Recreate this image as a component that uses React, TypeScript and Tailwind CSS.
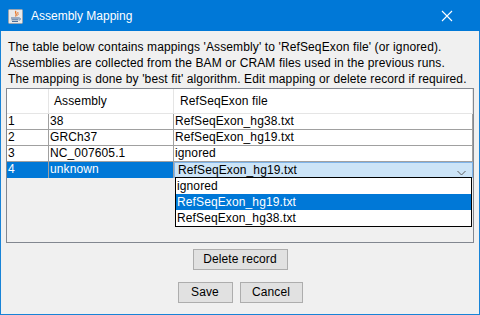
import React from "react";

const rows = [
  { n: "1", asm: "38", file: "RefSeqExon_hg38.txt" },
  { n: "2", asm: "GRCh37", file: "RefSeqExon_hg19.txt" },
  { n: "3", asm: "NC_007605.1", file: "ignored" },
];

const options = ["ignored", "RefSeqExon_hg19.txt", "RefSeqExon_hg38.txt"];

function JavaIcon() {
  return (
    <svg width="15" height="15" viewBox="0 0 15 15">
      <rect x="0.5" y="0.5" width="14" height="14" rx="1" fill="#e9e9e9" stroke="#9aa4b0" />
      <path d="M8 2 C6 4 10 5 7.5 7.5" stroke="#e8782a" strokeWidth="1.3" fill="none" />
      <path d="M10 3 C9 4.5 11 5 9.5 6.5" stroke="#e8782a" strokeWidth="1" fill="none" />
      <path d="M3 9 H11 M3.5 10.8 H10.5 M4 12.5 H10" stroke="#4a6f9c" strokeWidth="1" />
      <path d="M11 9 C13 9 13 11 11 11" stroke="#4a6f9c" strokeWidth="0.9" fill="none" />
    </svg>
  );
}

function CloseIcon() {
  return (
    <svg width="12" height="12" viewBox="0 0 12 12">
      <path d="M1 1 L11 11 M11 1 L1 11" stroke="#fff" strokeWidth="1.1" />
    </svg>
  );
}

export default function App() {
  return (
    <div
      className="w-[480px] h-[315px] flex flex-col bg-[#f0f0f0] text-[12px] text-black"
      style={{ fontFamily: '"Liberation Sans", Arial, sans-serif' }}
    >
      {/* Title bar */}
      <div className="h-[31px] bg-[#0078d7] flex items-center text-white shrink-0">
        <div className="ml-[8px] mt-[1px]">
          <JavaIcon />
        </div>
        <div className="ml-[8px] text-[12px]">Assembly Mapping</div>
        <div className="ml-auto mr-[27px] flex items-center">
          <CloseIcon />
        </div>
      </div>

      <div className="flex-1 flex flex-col border-x border-b border-[#1883d7] px-[5px] pt-[8px] tracking-[0.12px]">
        <div className="pl-[2px] leading-[16px] whitespace-nowrap">
          <div>The table below contains mappings 'Assembly' to 'RefSeqExon file' (or ignored).</div>
          <div>Assemblies are collected from the BAM or CRAM files used in the previous runs.</div>
          <div>The mapping is done by 'best fit' algorithm. Edit mapping or delete record if required.</div>
        </div>

        {/* Table pane */}
        <div className="relative mt-[1px] h-[155px] border border-[#828790] bg-[#f0f0f0]">
          <div className="flex h-[25px] bg-white border-b border-[#e5e5e5]">
            <div className="w-[42px] border-r border-[#e5e5e5]" />
            <div className="w-[125px] border-r border-[#e5e5e5] pl-[5px] flex items-center">Assembly</div>
            <div className="w-[299px] border-r border-[#e5e5e5] pl-[6px] flex items-center">RefSeqExon file</div>
          </div>
          {rows.map((r) => (
            <div key={r.n} className="flex h-[16px] bg-white border-b border-[#a0a0a0] leading-[15px]">
              <div className="w-[42px] border-r border-[#a0a0a0] pl-[1px]">{r.n}</div>
              <div className="w-[125px] border-r border-[#a0a0a0] pl-[1px]">{r.asm}</div>
              <div className="w-[299px] border-r border-[#a0a0a0] pl-[1px]">{r.file}</div>
            </div>
          ))}
          <div className="flex h-[16px] leading-[15px]">
            <div className="w-[42px] bg-[#0078d7] text-white border-r border-[#a0a0a0] pl-[1px]">4</div>
            <div className="w-[125px] bg-[#0078d7] text-white border-r border-[#a0a0a0] pl-[1px]">unknown</div>
            <div className="w-[299px] border border-[#7eb4ea] bg-[#cce4f7] flex items-center pl-[3px] pr-[6px]">
              <span className="flex-1 overflow-hidden h-[13px] leading-[13px]">RefSeqExon_hg19.txt</span>
              <svg width="9" height="6" viewBox="0 0 9 6" className="mt-[5px]">
                <path d="M0.5 1 L4.5 5 L8.5 1" stroke="#606060" fill="none" strokeWidth="1" />
              </svg>
            </div>
          </div>

          {/* Dropdown popup */}
          <div className="absolute left-[168px] top-[88px] w-[297px] border border-black bg-white">
            {options.map((o, i) => (
              <div
                key={o}
                className={`h-[16px] leading-[16px] pl-[1px] ${i === 1 ? "bg-[#0078d7] text-white" : ""}`}
              >
                {o}
              </div>
            ))}
          </div>
        </div>

        <div className="flex justify-center mt-[6px]">
          <button className="w-[95px] h-[21px] bg-[#e1e1e1] border border-[#adadad] leading-[19px]">
            Delete record
          </button>
        </div>
        <div className="flex justify-center gap-[7px] mt-[12px]">
          <button className="w-[55px] h-[21px] bg-[#e1e1e1] border border-[#adadad] leading-[19px]">Save</button>
          <button className="w-[63px] h-[21px] bg-[#e1e1e1] border border-[#adadad] leading-[19px]">Cancel</button>
        </div>
      </div>
    </div>
  );
}
